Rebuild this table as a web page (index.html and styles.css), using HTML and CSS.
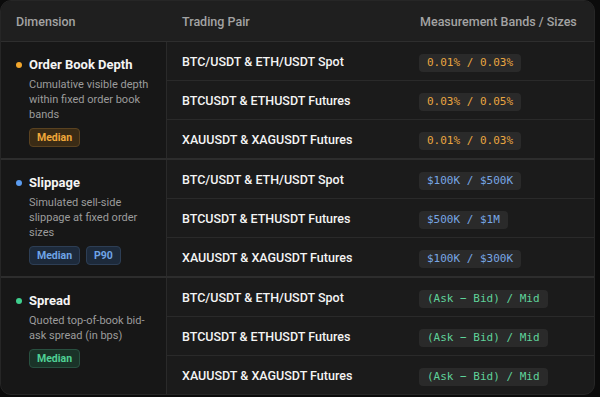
FILE: index.html
```html
<!DOCTYPE html>
<html>
<head>
<meta charset="utf-8">
<link rel="stylesheet" href="styles.css">
</head>
<body>
<div class="card">
  <div class="head">
    <div class="hcell c1">Dimension</div>
    <div class="hcell c2">Trading Pair</div>
    <div class="hcell c3">Measurement Bands / Sizes</div>
  </div>

  <div class="group">
    <div class="dim">
      <div class="title"><span class="dot orange"></span>Order Book Depth</div>
      <div class="desc">Cumulative visible depth within fixed order book bands</div>
      <div class="tags"><span class="tag t-orange">Median</span></div>
    </div>
    <div class="rows">
      <div class="row"><div class="pair">BTC/USDT &amp; ETH/USDT Spot</div><div class="val"><code class="code k-orange">0.01% / 0.03%</code></div></div>
      <div class="row"><div class="pair">BTCUSDT &amp; ETHUSDT Futures</div><div class="val"><code class="code k-orange">0.03% / 0.05%</code></div></div>
      <div class="row"><div class="pair">XAUUSDT &amp; XAGUSDT Futures</div><div class="val"><code class="code k-orange">0.01% / 0.03%</code></div></div>
    </div>
  </div>

  <div class="group">
    <div class="dim">
      <div class="title"><span class="dot blue"></span>Slippage</div>
      <div class="desc">Simulated sell-side slippage at fixed order sizes</div>
      <div class="tags"><span class="tag t-blue">Median</span><span class="tag t-blue">P90</span></div>
    </div>
    <div class="rows">
      <div class="row"><div class="pair">BTC/USDT &amp; ETH/USDT Spot</div><div class="val"><code class="code k-blue">$100K / $500K</code></div></div>
      <div class="row"><div class="pair">BTCUSDT &amp; ETHUSDT Futures</div><div class="val"><code class="code k-blue">$500K / $1M</code></div></div>
      <div class="row"><div class="pair">XAUUSDT &amp; XAGUSDT Futures</div><div class="val"><code class="code k-blue">$100K / $300K</code></div></div>
    </div>
  </div>

  <div class="group">
    <div class="dim">
      <div class="title"><span class="dot green"></span>Spread</div>
      <div class="desc">Quoted top-of-book bid-ask spread (in bps)</div>
      <div class="tags"><span class="tag t-green">Median</span></div>
    </div>
    <div class="rows">
      <div class="row"><div class="pair">BTC/USDT &amp; ETH/USDT Spot</div><div class="val"><code class="code k-green">(Ask − Bid) / Mid</code></div></div>
      <div class="row"><div class="pair">BTCUSDT &amp; ETHUSDT Futures</div><div class="val"><code class="code k-green">(Ask − Bid) / Mid</code></div></div>
      <div class="row"><div class="pair">XAUUSDT &amp; XAGUSDT Futures</div><div class="val"><code class="code k-green">(Ask − Bid) / Mid</code></div></div>
    </div>
  </div>
</div>
</body>
</html>
```

FILE: styles.css
```css
* { box-sizing: border-box; }
html, body { margin: 0; padding: 0; }
body {
  background: #0b0b0b;
  width: 600px;
  height: 397px;
  overflow: hidden;
  font-family: Roboto, "Liberation Sans", sans-serif;
  padding: 0 4px 3px 0;
}
.card {
  background: #1b1b1b;
  border: 1px solid #262626;
  border-radius: 11px;
  overflow: hidden;
  width: 595px;
}
.head {
  display: flex;
  height: 41px;
  background: #1f1f1f;
  border-bottom: 1px solid #2e2e2e;
}
.hcell {
  display: flex;
  align-items: center;
  font-size: 12.5px;
  font-weight: 500;
  color: #a3a3a3;
}
.c1 { width: 166px; padding-left: 15px; }
.c2 { width: 238px; padding-left: 15px; }
.c3 { flex: 1; padding-left: 15px; }

.group {
  display: flex;
  border-bottom: 2px solid #2d2d2d;
}
.group:last-child { border-bottom: none; }
.dim {
  width: 166px;
  flex: none;
  padding: 14px 10px 10px 15px;
  background: #171717;
  border-right: 1px solid #2a2a2a;
}
.title {
  display: flex;
  align-items: center;
  gap: 7px;
  font-size: 13px;
  font-weight: 700;
  color: #f4f4f4;
  line-height: 17px;
}
.dot {
  width: 6px;
  height: 6px;
  border-radius: 50%;
  flex: none;
}
.dot.orange { background: #f2a62c; }
.dot.blue { background: #5b9cf0; }
.dot.green { background: #3fcf8e; }
.desc {
  margin: 4px 0 6px 13px;
  font-size: 11px;
  line-height: 15px;
  color: #9c9c9c;
}
.tags {
  display: flex;
  gap: 6px;
  margin-left: 13px;
}
.tag {
  font-size: 10.5px;
  font-weight: 700;
  line-height: 17px;
  padding: 0 7px;
  border-radius: 4px;
  border: 1px solid;
}
.t-orange { color: #f0a83a; background: #3a2b15; border-color: #5a4220; }
.t-blue { color: #6fa4e6; background: #1d2a3b; border-color: #2d3e55; }
.t-green { color: #4fd095; background: #1a3328; border-color: #285040; }

.rows { flex: 1; display: flex; flex-direction: column; }
.row {
  display: flex;
  align-items: center;
  height: 39px;
  border-bottom: 1px solid #2a2a2a;
}
.row:last-child { border-bottom: none; height: 38px; }
.pair {
  width: 238px;
  padding-left: 15px;
  font-size: 12.5px;
  font-weight: 500;
  color: #f4f4f4;
}
.val { flex: 1; padding-left: 14px; }
.code {
  display: inline-block;
  font-family: "DejaVu Sans Mono", "Liberation Mono", monospace;
  font-size: 11px;
  line-height: 18px;
  padding: 0 8px;
  border-radius: 4px;
  background: #2a2a2a;
}
.k-orange { color: #e9a640; }
.k-blue { color: #78a6e4; }
.k-green { color: #5fd39a; }
```
